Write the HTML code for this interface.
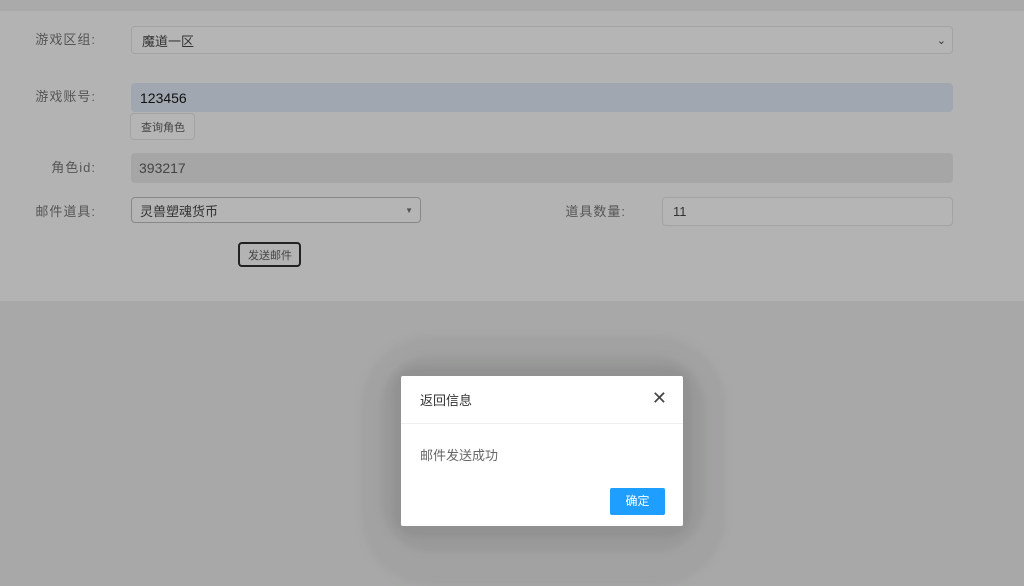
<!DOCTYPE html>
<html><head><meta charset="utf-8"><style>
*{margin:0;padding:0;box-sizing:border-box}
body{width:1024px;height:573px;overflow:hidden;background:#a7a8a7;font-family:"Liberation Sans","Noto Sans CJK SC",sans-serif;position:relative}
.top{position:absolute;left:0;top:0;width:1024px;height:11px;background:#a9aaa9}
.form{position:absolute;left:0;top:11px;width:1024px;height:290px;background:#b3b3b3}
.lbl{position:absolute;font-size:13px;color:#555;text-align:right;width:96px;left:0;letter-spacing:1px;line-height:16px}
.box{position:absolute;border:1px solid #a3a3a3;border-radius:4px;background:#b5b5b5;font-size:13px;color:#333;padding-left:10px;display:flex;align-items:center}
.sh{position:absolute;border-radius:60px;filter:blur(3px)}
.modal{position:absolute;left:401px;top:376px;width:282px;height:150px;background:#fff;border-radius:2px}
</style></head><body>
<div class="top"></div>
<div class="form">
<div class="lbl" style="top:21px">游戏区组:</div>
<div class="box" style="left:131px;top:15px;width:822px;height:28px">魔道一区<span style="position:absolute;right:6px;font-size:11px">⌄</span></div>
<div class="lbl" style="top:78px">游戏账号:</div>
<div class="box" style="left:131px;top:72px;width:822px;height:29px;background:#a1a7b1;border-color:#a1a7b1;padding-left:8px;font-size:14px;color:#111">123456</div>
<div class="box" style="left:130px;top:102px;width:65px;height:27px;font-size:11px;color:#444;padding-left:10px">查询角色</div>
<div class="lbl" style="top:149px">角色id:</div>
<div class="box" style="left:131px;top:142px;width:822px;height:30px;background:#a6a6a6;border-color:#a6a6a6;font-size:14px;color:#444;padding-left:7px">393217</div>
<div class="lbl" style="top:193px">邮件道具:</div>
<div class="box" style="left:131px;top:186px;width:290px;height:26px;border-color:#888;color:#333;padding-left:8px">灵兽塑魂货币<span style="position:absolute;right:7px;font-size:8px;color:#555">▼</span></div>
<div class="lbl" style="top:193px;left:530px">道具数量:</div>
<div class="box" style="left:662px;top:186px;width:291px;height:29px;color:#333">11</div>
<div class="box" style="left:238px;top:231px;width:63px;height:25px;border:2px solid #222;font-size:11px;color:#444;padding-left:8px;background:#b3b3b3">发送邮件</div>
</div>
<div class="sh" style="left:361px;top:336px;width:365px;height:250px;background:#a1a2a1;border-radius:70px"></div>
<div class="sh" style="left:381px;top:356px;width:324px;height:196px;background:#999a99;border-radius:50px"></div>
<div class="sh" style="left:393px;top:367px;width:298px;height:170px;background:#919191;border-radius:25px"></div>
<div class="modal">
<div style="position:absolute;left:19px;top:14px;font-size:13px;color:#333">返回信息</div>
<div style="position:absolute;right:16px;top:12px;font-size:18px;color:#444">✕</div>
<div style="position:absolute;left:0;top:47px;width:100%;height:1px;background:#eee"></div>
<div style="position:absolute;left:19px;top:69px;font-size:13px;color:#666">邮件发送成功</div>
<div style="position:absolute;left:209px;top:112px;width:55px;height:27px;background:#1e9fff;border-radius:2px;color:#fff;font-size:12px;text-align:center;line-height:27px">确定</div>
</div>
</body></html>
